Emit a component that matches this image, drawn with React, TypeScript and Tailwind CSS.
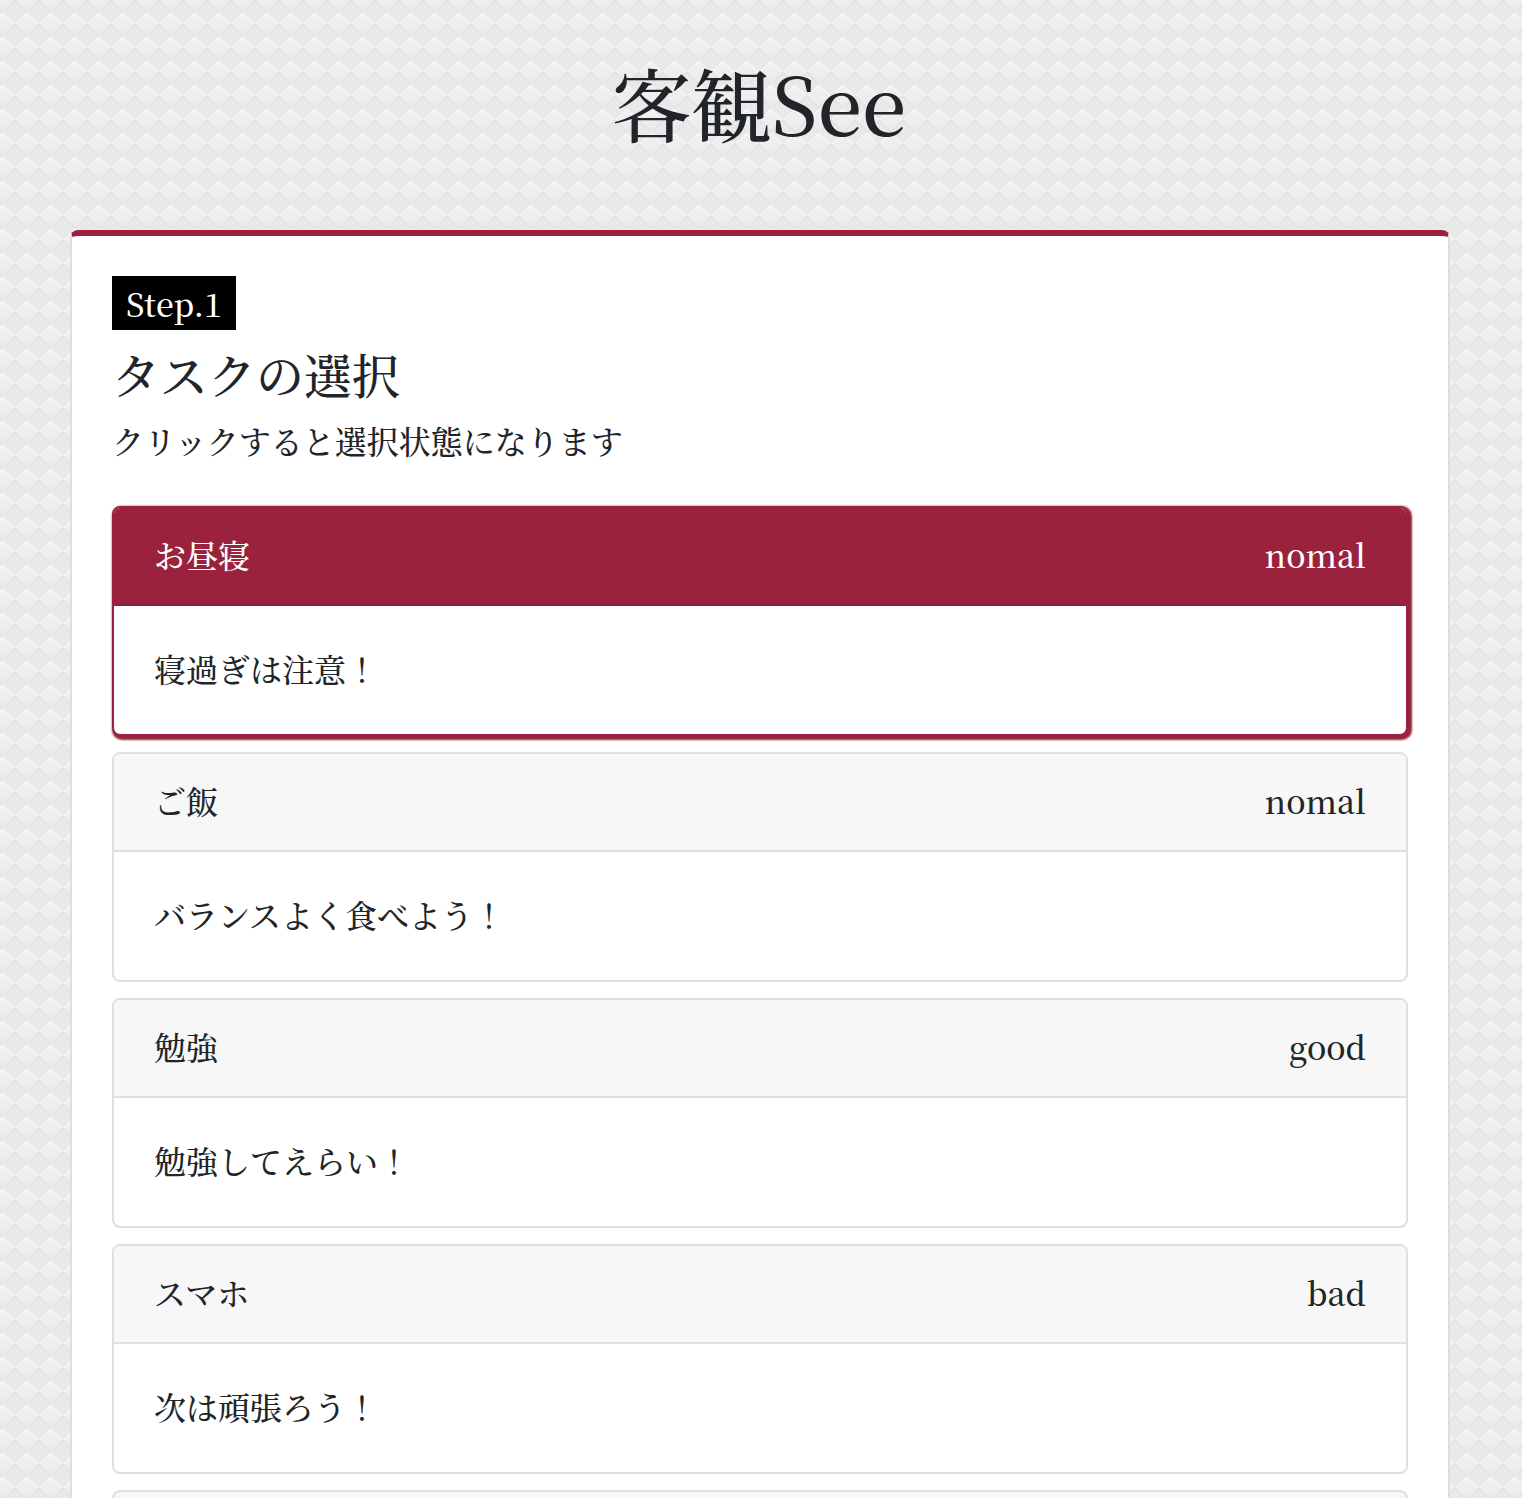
import { useState } from "react";

const tasks = [
  { name: "お昼寝", rank: "nomal", note: "寝過ぎは注意！" },
  { name: "ご飯", rank: "nomal", note: "バランスよく食べよう！" },
  { name: "勉強", rank: "good", note: "勉強してえらい！" },
  { name: "スマホ", rank: "bad", note: "次は頑張ろう！" },
];

type Task = (typeof tasks)[number];

function Backdrop() {
  return (
    <svg className="absolute inset-0 -z-10 h-full w-full" aria-hidden="true">
      <defs>
        <linearGradient id="facet" x1="0" y1="0" x2="0" y2="1">
          <stop offset="0" stopColor="#f0f0f0" />
          <stop offset="1" stopColor="#ececec" />
        </linearGradient>
        <pattern id="weave" x="15" y="12" width="24" height="24" patternUnits="userSpaceOnUse">
          <rect width="24" height="24" fill="#e9e9e9" />
          <path d="M12 1 L23 12 L12 23 L1 12 Z" fill="url(#facet)" />
          <path d="M0 12 L12 24 L24 12" fill="none" stroke="#e1e1e1" strokeWidth="1.2" />
          <path d="M1 12 L12 1.5 L23 12" fill="none" stroke="#f6f6f6" strokeWidth="1.4" />
        </pattern>
      </defs>
      <rect width="100%" height="100%" fill="url(#weave)" />
    </svg>
  );
}

function TaskCard({ task, selected, onSelect }: { task: Task; selected: boolean; onSelect: () => void }) {
  return (
    <button
      type="button"
      aria-pressed={selected}
      onClick={onSelect}
      className={
        "block w-full cursor-pointer overflow-hidden rounded-lg border-2 bg-white text-left " +
        (selected ? "border-[#9b223d] shadow-[2px_2px_2px_2px_#9b223d]" : "border-[#dfdfdf]")
      }
    >
      <span
        className={
          "flex justify-between border-b-2 px-10 pt-[22px] pb-[26px] " +
          (selected ? "border-[#86203a] bg-[#9b223d] text-white" : "border-[#dfdfdf] bg-[#f7f7f7]")
        }
      >
        <span>{task.name}</span>
        <span>{task.rank}</span>
      </span>
      <span className="block px-10 pt-[38px] pb-[42px]">{task.note}</span>
    </button>
  );
}

export default function App() {
  const [selected, setSelected] = useState(0);
  return (
    <div className="relative isolate flex min-h-screen flex-col font-['Noto_Serif_CJK_JP','Noto_Sans_CJK_JP',serif] text-[32px] leading-[48px] font-medium text-[#212529]">
      <Backdrop />
      <h1 className="pt-[54px] pr-1 pb-20 text-center text-[80px] leading-[96px] font-medium">客観See</h1>
      <main className="mr-[72px] ml-[70px] flex-1 rounded-t-lg border-x-2 border-t-6 border-x-[#dfdfdf] border-t-[#9b223d] bg-white px-10 pt-10">
        <p className="w-fit bg-black px-3.5 py-[3px] text-white">Step.1</p>
        <h2 className="mt-3.5 mb-3 text-5xl leading-[60px] font-medium">タスクの選択</h2>
        <p className="mb-[42px]">クリックすると選択状態になります</p>
        <div className="flex flex-col gap-4">
          {tasks.map((task, i) => (
            <TaskCard key={task.name} task={task} selected={selected === i} onSelect={() => setSelected(i)} />
          ))}
          <div className="h-2 rounded-t-lg border-2 border-b-0 border-[#dfdfdf] bg-[#f7f7f7]" />
        </div>
      </main>
    </div>
  );
}
